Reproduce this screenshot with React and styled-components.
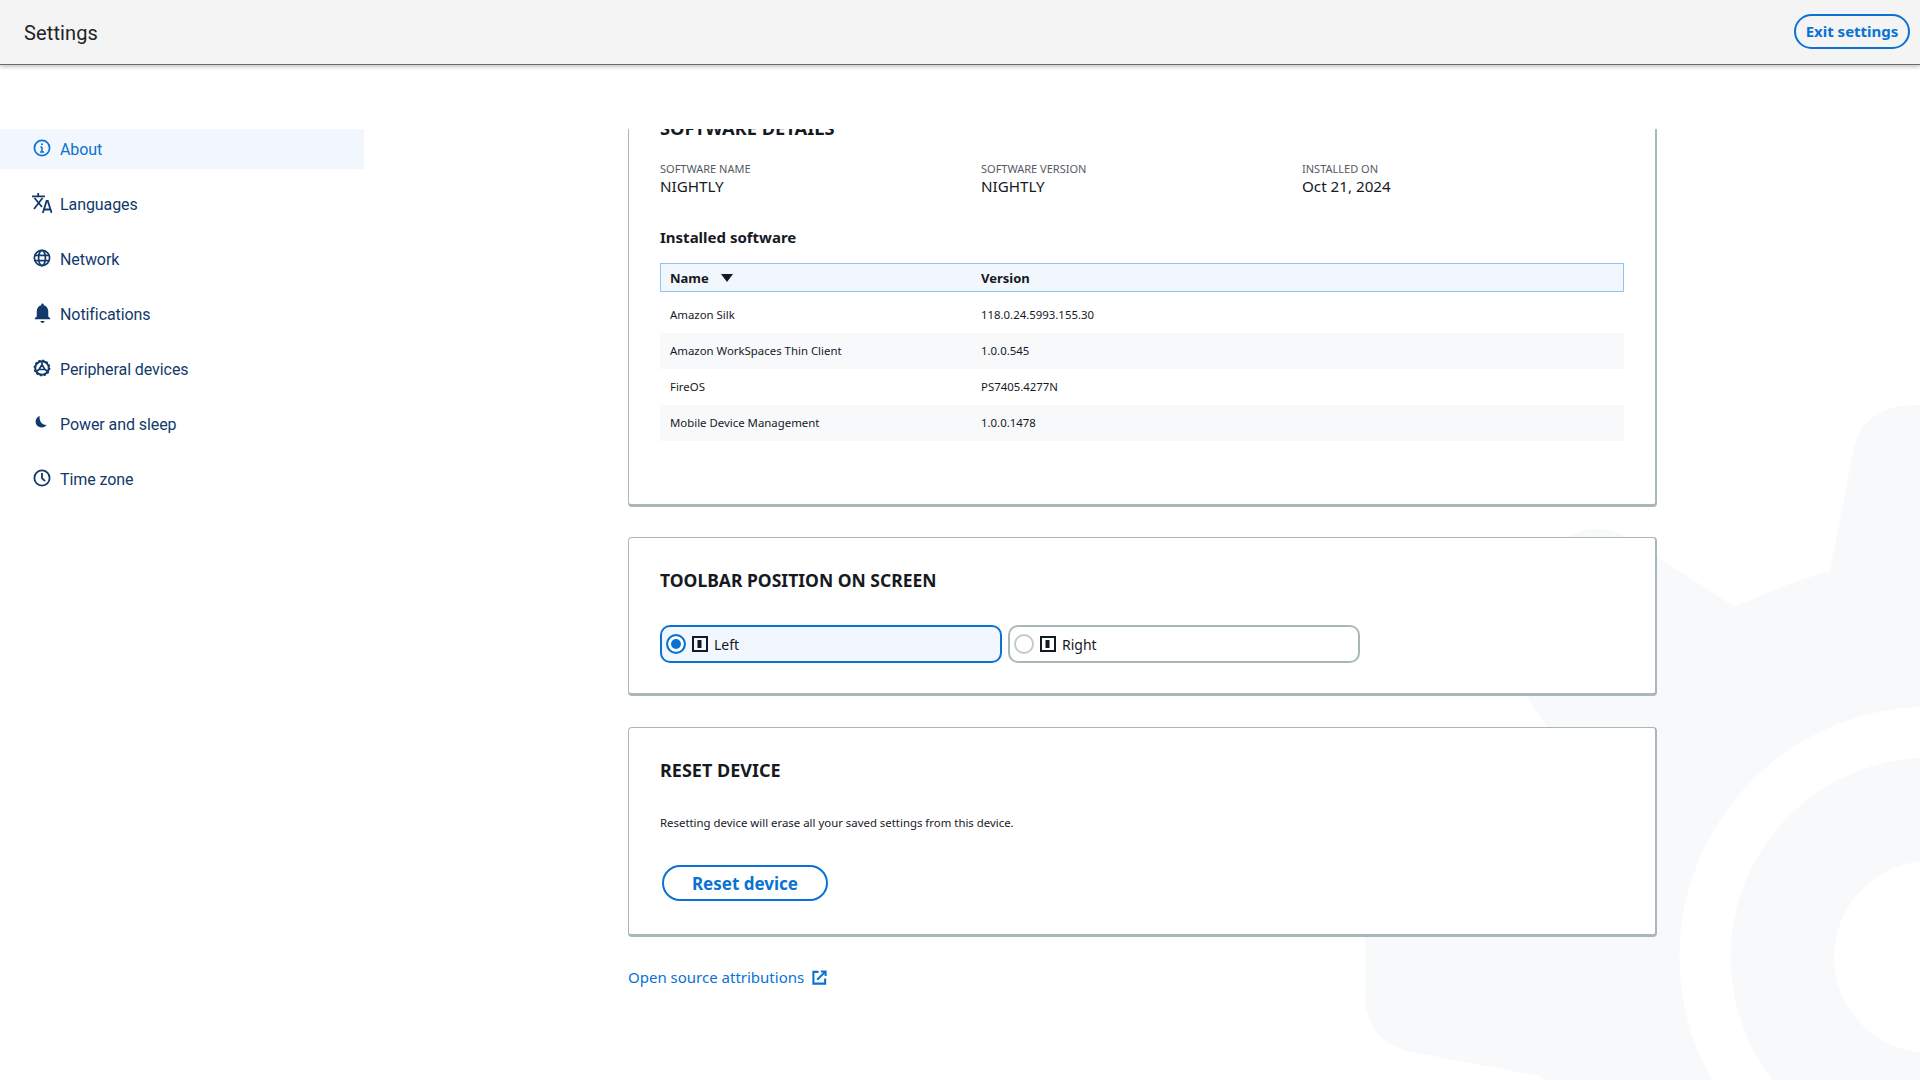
import styled, { createGlobalStyle } from "styled-components";

const GlobalStyle = createGlobalStyle`
  html, body {
    margin: 0;
    height: 100%;
    background: #fff;
  }
  * {
    box-sizing: border-box;
  }
`;

const BODY_FONT = `"Noto Sans", "Open Sans", sans-serif`;

const navItems = [
  { label: "About", icon: "about", active: true },
  { label: "Languages", icon: "languages" },
  { label: "Network", icon: "network" },
  { label: "Notifications", icon: "bell" },
  { label: "Peripheral devices", icon: "peripheral" },
  { label: "Power and sleep", icon: "moon" },
  { label: "Time zone", icon: "clock" },
];

const softwareRows = [
  ["Amazon Silk", "118.0.24.5993.155.30"],
  ["Amazon WorkSpaces Thin Client", "1.0.0.545"],
  ["FireOS", "PS7405.4277N"],
  ["Mobile Device Management", "1.0.0.1478"],
];

function NavIcon({ name }) {
  if (name === "about") {
    return (
      <svg width="20" height="20" viewBox="0 0 20 20" fill="none" stroke="currentColor" strokeWidth="1.7">
        <circle cx="10" cy="10" r="7.6" />
        <path d="M10 9v5M8 14h4M8.4 9H10" strokeWidth="1.5" />
        <circle cx="10" cy="6.2" r="1" fill="currentColor" stroke="none" />
      </svg>
    );
  }
  if (name === "languages") {
    return (
      <svg width="20" height="20" viewBox="0 0 20 20" fill="none" stroke="currentColor" strokeWidth="1.8">
        <path d="M0 3.4h13M6.2 0v3.4M2.5 5 10 14M10.5 5 2 16" />
        <path d="M10.8 20 14.6 8h1.2L19.6 20M12 16.5h6.4" />
      </svg>
    );
  }
  if (name === "network") {
    return (
      <svg width="20" height="20" viewBox="0 0 20 20" fill="none" stroke="currentColor" strokeWidth="1.7">
        <circle cx="10" cy="10" r="7.6" />
        <ellipse cx="10" cy="10" rx="3.4" ry="7.6" />
        <path d="M2.6 7.4h14.8M2.6 12.6h14.8" />
      </svg>
    );
  }
  if (name === "bell") {
    return (
      <svg width="23" height="23" viewBox="0 0 20 20" fill="currentColor">
        <path d="M10 1.2c.7 0 1.1.5 1.1 1.2v.5c2.4.6 3.9 2.6 3.9 5.2v4.4l1.7 1.6v.8H3.3v-.8L5 12.5V8.1c0-2.6 1.5-4.6 3.9-5.2v-.5c0-.7.4-1.2 1.1-1.2z" />
        <path d="M8.2 16.6h3.6c0 1-.8 1.6-1.8 1.6s-1.8-.6-1.8-1.6z" />
      </svg>
    );
  }
  if (name === "peripheral") {
    return (
      <svg width="20" height="20" viewBox="0 0 20 20" fill="none" stroke="currentColor">
        <circle cx="10" cy="10" r="6.8" strokeWidth="2" />
        <circle cx="10" cy="10" r="7.6" strokeWidth="1.6" strokeDasharray="2 2" />
        <path d="M10 6.5 7 11.5h6zM10 3v3.5M3.6 14 7 11.5M16.4 14 13 11.5" strokeWidth="1.6" />
      </svg>
    );
  }
  if (name === "moon") {
    return (
      <svg width="20" height="20" viewBox="0 0 20 20" fill="currentColor">
        <path d="M7.6 2.8C4.8 4 3.4 6.6 3.6 9.2c.3 3.1 3 5.3 6.2 5.2 2.1 0 3.9-1 5.1-2.6-3.8.8-8-2.6-7.3-9z" />
      </svg>
    );
  }
  return (
    <svg width="20" height="20" viewBox="0 0 20 20" fill="none" stroke="currentColor" strokeWidth="1.8">
      <circle cx="10" cy="10" r="7.6" />
      <path d="M10 5v5.2l3 3" />
    </svg>
  );
}

function PanelIcon() {
  return (
    <svg width="16" height="16" viewBox="0 0 16 16">
      <rect x="1" y="1" width="14" height="14" fill="none" stroke="#16191f" strokeWidth="2" />
      <rect x="5.5" y="4" width="4" height="8" fill="#16191f" />
    </svg>
  );
}

function ExternalIcon() {
  return (
    <svg width="15" height="15" viewBox="0 0 16 16" fill="none" stroke="#0972d3" strokeWidth="2.2">
      <path d="M7 2H1.5v12.5H14V9" />
      <path d="M5.5 10.5 14 2M9.5 1.5h5v5" />
    </svg>
  );
}

function GearBackdrop() {
  return (
    <Backdrop width="1920" height="1080" viewBox="0 0 1920 1080">
      <path
        fill="#f8f9fb"
        d="M1920 405H1909Q1862 410 1854 447L1830 571Q1780 585 1735 607L1645 549Q1603 515 1566 538L1490 660L1527 697L1547 727L1480 770Q1420 790 1395 800Q1365 815 1365 860V1003Q1370 1040 1407 1051L1539 1076L1545 1080H1920Z"
      />
      <circle cx="1930" cy="957" r="225" fill="none" stroke="#fff" strokeWidth="51" />
      <circle cx="1930" cy="957" r="96" fill="#fff" />
    </Backdrop>
  );
}

export default function App() {
  return (
    <>
      <GlobalStyle />
      <Page>
        <GearBackdrop />
        <Header>
          <Title>Settings</Title>
          <ExitButton>Exit settings</ExitButton>
        </Header>
        <Body>
          <Sidebar>
            {navItems.map((item) => (
              <NavItem key={item.label} $active={item.active}>
                <NavIconSlot>
                  <NavIcon name={item.icon} />
                </NavIconSlot>
                {item.label}
              </NavItem>
            ))}
          </Sidebar>
          <Main>
            <ScrolledCard>
              <CardTitle $size={18.3}>SOFTWARE DETAILS</CardTitle>
              <DetailGrid>
                <div>
                  <DetailLabel>SOFTWARE NAME</DetailLabel>
                  <DetailValue>NIGHTLY</DetailValue>
                </div>
                <div>
                  <DetailLabel>SOFTWARE VERSION</DetailLabel>
                  <DetailValue>NIGHTLY</DetailValue>
                </div>
                <div>
                  <DetailLabel>INSTALLED ON</DetailLabel>
                  <DetailValue>Oct 21, 2024</DetailValue>
                </div>
              </DetailGrid>
              <SubTitle>Installed software</SubTitle>
              <TableHead>
                <HeadCell>
                  Name <SortCaret />
                </HeadCell>
                <HeadCell>Version</HeadCell>
              </TableHead>
              <TableBody>
                {softwareRows.map(([name, version]) => (
                  <TableRow key={name}>
                    <span>{name}</span>
                    <span>{version}</span>
                  </TableRow>
                ))}
              </TableBody>
            </ScrolledCard>

            <ToolbarCard>
              <CardTitle $size={17.5}>TOOLBAR POSITION ON SCREEN</CardTitle>
              <RadioRow>
                <RadioTile $checked $width={342}>
                  <RadioDot $checked />
                  <PanelIcon />
                  Left
                </RadioTile>
                <RadioTile $width={352}>
                  <RadioDot />
                  <PanelIcon />
                  Right
                </RadioTile>
              </RadioRow>
            </ToolbarCard>

            <ResetCard>
              <CardTitle $size={18}>RESET DEVICE</CardTitle>
              <ResetText>Resetting device will erase all your saved settings from this device.</ResetText>
              <ResetButton>Reset device</ResetButton>
            </ResetCard>

            <AttributionLink>
              Open source attributions
              <ExternalIcon />
            </AttributionLink>
          </Main>
        </Body>
      </Page>
    </>
  );
}

const Page = styled.div`
  position: relative;
  width: 100%;
  height: 1080px;
  overflow: hidden;
  font-family: ${BODY_FONT};
  color: #16191f;
`;
const Backdrop = styled.svg`
  position: absolute;
  left: 0;
  top: 0;
`;
const Header = styled.header`
  position: relative;
  height: 65px;
  display: flex;
  align-items: flex-start;
  justify-content: space-between;
  padding: 14px 10px 0 24px;
  background: #f4f4f4;
  border-bottom: 1px solid #6b6b6b;
  box-shadow: 0 2px 4px rgba(0, 0, 0, 0.22);
`;
const Title = styled.h1`
  margin: 5px 0 0;
  font-family: Roboto, sans-serif;
  font-size: 20px;
  line-height: 28px;
  font-weight: 400;
  letter-spacing: 0.12px;
  color: #232323;
`;
const ExitButton = styled.button`
  width: 116px;
  height: 35px;
  padding: 0 0 2px;
  border: 2px solid #0972d3;
  border-radius: 18px;
  background: transparent;
  font-family: ${BODY_FONT};
  font-size: 15px;
  font-weight: 700;
  color: #0972d3;
`;
const Body = styled.div`
  position: relative;
  display: flex;
  height: 1015px;
  padding-top: 64px;
`;
const Sidebar = styled.nav`
  width: 364px;
  flex-shrink: 0;
  display: flex;
  flex-direction: column;
  gap: 15px;
`;
const NavItem = styled.a`
  height: 40px;
  display: flex;
  align-items: center;
  padding-left: 32px;
  font-family: Roboto, sans-serif;
  font-size: 16px;
  letter-spacing: -0.08px;
  color: ${(p) => (p.$active ? "#0972d3" : "#123a6b")};
  background: ${(p) => (p.$active ? "#f2f7fe" : "transparent")};
`;
const NavIconSlot = styled.span`
  width: 20px;
  height: 22px;
  margin-right: 8px;
  margin-top: -2px;
  display: flex;
  align-items: center;
  justify-content: center;
  & > svg {
    flex-shrink: 0;
  }
`;
const Main = styled.main`
  width: 1029px;
  margin-left: 264px;
  height: 951px;
  overflow: hidden;
  display: flex;
  flex-direction: column;
`;
const Card = styled.section`
  flex-shrink: 0;
  padding: 30px 31px 0;
  background: #fff;
  border: 1px solid #aab7b8;
  border-right-width: 2px;
  border-bottom-width: 3px;
  border-radius: 4px;
`;
const ScrolledCard = styled(Card)`
  height: 422px;
  margin-top: -44px;
`;
const ToolbarCard = styled(Card)`
  height: 159px;
  margin-top: 30px;
`;
const ResetCard = styled(Card)`
  height: 210px;
  margin-top: 31px;
`;
const CardTitle = styled.h2`
  margin: 0;
  font-size: ${(p) => p.$size}px;
  line-height: 24px;
  font-weight: 700;
  color: #16191f;
`;
const DetailGrid = styled.div`
  display: grid;
  grid-template-columns: 321px 321px 1fr;
  margin-top: 22px;
`;
const DetailLabel = styled.div`
  font-size: 11px;
  line-height: 14px;
  color: #545b64;
`;
const DetailValue = styled.div`
  font-size: 15.2px;
  line-height: 20px;
  color: #16191f;
`;
const SubTitle = styled.h3`
  margin: 30px 0 0;
  font-size: 15px;
  line-height: 22px;
  font-weight: 700;
`;
const TableHead = styled.div`
  display: grid;
  grid-template-columns: 311px 1fr;
  align-items: center;
  width: 964px;
  height: 29px;
  margin-top: 15px;
  padding-left: 9px;
  background: #f2f7fe;
  border: 1px solid #8ec3f2;
`;
const HeadCell = styled.div`
  display: flex;
  align-items: center;
  gap: 12px;
  font-size: 13px;
  font-weight: 700;
`;
const SortCaret = styled.i`
  width: 0;
  height: 0;
  border-left: 6px solid transparent;
  border-right: 6px solid transparent;
  border-top: 8px solid #16191f;
`;
const TableBody = styled.div`
  width: 964px;
  margin-top: 5px;
`;
const TableRow = styled.div`
  display: grid;
  grid-template-columns: 311px 1fr;
  height: 36px;
  align-items: center;
  padding-left: 10px;
  padding-bottom: 1px;
  font-size: 11.4px;
  color: #16191f;
  &:nth-child(even) {
    background: #f8f9fb;
  }
`;
const RadioRow = styled.div`
  display: flex;
  gap: 6px;
  margin-top: 33px;
`;
const RadioTile = styled.label`
  width: ${(p) => p.$width}px;
  height: 38px;
  display: flex;
  align-items: center;
  gap: 6px;
  padding-left: 4px;
  font-size: 14px;
  background: ${(p) => (p.$checked ? "#f2f7fe" : "#fff")};
  border: 2px solid ${(p) => (p.$checked ? "#0972d3" : "#aab7b8")};
  border-radius: 10px;
`;
const RadioDot = styled.span`
  width: 20px;
  height: 20px;
  border-radius: 50%;
  border: ${(p) => (p.$checked ? "2px solid #0972d3" : "2px solid #c6c9cc")};
  background: ${(p) => (p.$checked ? "#0972d3" : "#fff")};
  box-shadow: ${(p) => (p.$checked ? "inset 0 0 0 3px #fff" : "none")};
`;
const ResetText = styled.p`
  margin: 32px 0 0;
  font-size: 11.4px;
  line-height: 18px;
`;
const ResetButton = styled.button`
  display: block;
  width: 166px;
  height: 36px;
  margin: 33px 0 0 2px;
  padding: 0;
  border: 2px solid #0972d3;
  border-radius: 18px;
  background: #fff;
  font-family: ${BODY_FONT};
  font-size: 17px;
  font-weight: 700;
  color: #0972d3;
`;
const AttributionLink = styled.a`
  display: flex;
  align-items: center;
  gap: 8px;
  margin-top: 28px;
  font-size: 15px;
  line-height: 24px;
  color: #0972d3;
`;
